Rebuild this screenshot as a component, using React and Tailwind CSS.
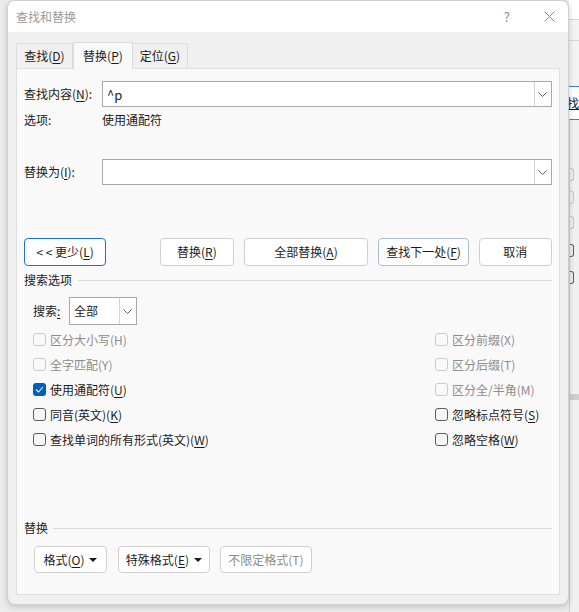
const font = { fontFamily: '"Noto Sans CJK SC", "Noto Sans", sans-serif' };

const U = ({ children }) => <span className="underline underline-offset-[2px] decoration-[1px]">{children}</span>;

const Chevron = () => (
  <svg width="9" height="5" viewBox="0 0 9 5" fill="none">
    <path d="M0.5 0.5 L4.5 4.5 L8.5 0.5" stroke="#606060" strokeWidth="1" />
  </svg>
);

const Caret = () => (
  <svg width="8" height="4" viewBox="0 0 8 4" className="ml-[5px]">
    <path d="M0 0 H8 L4 4 Z" fill="#1b1b1b" />
  </svg>
);

const Combo = ({ value }) => (
  <div className="flex-1 h-[26px] bg-white border border-[#a8a8a8] flex items-center">
    <span className="flex-1 pl-[4px] text-[13px] text-[#1b1b1b] leading-none">{value}</span>
    <div className="w-[17px] h-[24px] border-l border-[#d4d4d4] flex items-center justify-center">
      <Chevron />
    </div>
  </div>
);

const Btn = ({ children, w, h = 28, border = 'border-[#d0d0d0]', className = '' }) => (
  <div
    className={`bg-white border ${border} rounded-[4px] flex items-center justify-center text-[12px] text-[#1b1b1b] leading-none ${className}`}
    style={{ width: w, height: h }}
  >
    {children}
  </div>
);

const Check = ({ label, disabled, checked }) => (
  <div className="h-[25px] flex items-center">
    {checked ? (
      <span className="w-[13px] h-[13px] rounded-[3px] bg-[#005fb8] flex items-center justify-center">
        <svg width="9" height="7" viewBox="0 0 9 7" fill="none">
          <path d="M1 3.5 L3.5 6 L8 1" stroke="white" strokeWidth="1.1" />
        </svg>
      </span>
    ) : (
      <span
        className={`w-[13px] h-[13px] rounded-[3px] border ${
          disabled ? 'border-[#cbcbcb] bg-[#f9f9f9]' : 'border-[#5c5c5c] bg-[#f6f6f6]'
        }`}
      />
    )}
    <span className={`ml-[4px] text-[12px] leading-none ${disabled ? 'text-[#8c8c8c]' : 'text-[#1b1b1b]'}`}>{label}</span>
  </div>
);

const Section = ({ title, lineStart }) => (
  <div className="h-[16px] flex items-center">
    <span className="text-[12px] text-[#1b1b1b] leading-none">{title}</span>
    <div className="flex-1 h-px bg-[#dadada]" style={{ marginLeft: lineStart }} />
  </div>
);

export default function App() {
  return (
    <div className="w-[579px] h-[612px] bg-[#ececec] flex overflow-hidden" style={font}>
      <div className="w-[7px]" />
      <div className="w-[564px] h-[605px] bg-[#f0f0f0] rounded-[8px] border border-[#cfcfcf] shadow-[0_2px_6px_rgba(0,0,0,0.18)] flex flex-col overflow-hidden relative z-10">
        {/* title bar */}
        <div className="h-[31px] bg-white flex items-center pl-[8px] pr-[13px]">
          <span className="text-[12px] text-[#9a9a9a] leading-none">查找和替换</span>
          <span className="ml-auto text-[13px] text-[#8a8a8a] leading-none">?</span>
          <svg width="11" height="11" viewBox="0 0 11 11" className="ml-[34px]">
            <path d="M0.5 0.5 L10.5 10.5 M10.5 0.5 L0.5 10.5" stroke="#8a8a8a" strokeWidth="1" />
          </svg>
        </div>

        {/* tabs */}
        <div className="flex items-end ml-[8px] mt-[9px] h-[27px]">
          <div className="w-[57px] h-[25px] border border-[#dcdcdc] border-b-0 bg-[#f0f0f0] flex items-center justify-center text-[12px] text-[#1b1b1b] leading-none">
            查找(<U>D</U>)
          </div>
          <div className="w-[60px] h-[27px] border border-[#dcdcdc] border-b-0 bg-[#f9f9f9] flex items-center justify-center text-[12px] text-[#1b1b1b] leading-none -mb-px relative z-10">
            替换(<U>P</U>)
          </div>
          <div className="w-[55px] h-[25px] border border-[#dcdcdc] border-b-0 border-l-0 bg-[#f0f0f0] flex items-center justify-center text-[12px] text-[#1b1b1b] leading-none">
            定位(<U>G</U>)
          </div>
        </div>

        {/* panel */}
        <div className="mx-[8px] mb-[9px] flex-1 bg-[#f9f9f9] border border-[#e0e0e0] px-[7px] flex flex-col">
          <div className="mt-[12px] flex items-center">
            <span className="w-[78px] text-[12px] text-[#1b1b1b] leading-none">
              查找内容(<U>N</U>):
            </span>
            <Combo value="^p" />
          </div>
          <div className="h-[20px] mt-[3px] flex items-center text-[12px] text-[#1b1b1b] leading-none">
            <span className="w-[78px]">选项:</span>
            <span>使用通配符</span>
          </div>

          <div className="mt-[29px] flex items-center">
            <span className="w-[78px] text-[12px] text-[#1b1b1b] leading-none">
              替换为(<U>I</U>):
            </span>
            <Combo value="" />
          </div>

          <div className="mt-[53px] flex items-center">
            <Btn w={83} border="border-[#1a73c7]">
              &lt; &lt; 更少(<U>L</U>)
            </Btn>
            <Btn w={74} className="ml-[54px]">
              替换(<U>R</U>)
            </Btn>
            <Btn w={126} className="ml-[10px]">
              全部替换(<U>A</U>)
            </Btn>
            <Btn w={91} border="border-[#a9bdd6]" className="ml-[10px]">
              查找下一处(<U>F</U>)
            </Btn>
            <Btn w={74} className="ml-[10px]">
              取消
            </Btn>
          </div>

          <div className="mt-[6px]">
            <Section title="搜索选项" lineStart={6} />
          </div>

          <div className="mt-[9px] ml-[9px] flex items-center">
            <span className="text-[12px] text-[#1b1b1b] leading-none w-[36px]">
              搜索<U>:</U>
            </span>
            <div className="w-[68px] h-[28px] bg-white border border-[#a8a8a8] flex items-center">
              <span className="flex-1 pl-[4px] text-[12px] text-[#1b1b1b] leading-none">全部</span>
              <div className="w-[17px] h-[26px] border-l border-[#d4d4d4] flex items-center justify-center">
                <Chevron />
              </div>
            </div>
          </div>

          <div className="mt-[2px] ml-[9px] grid grid-cols-[402px_1fr]">
            <div className="flex flex-col">
              <Check label="区分大小写(H)" disabled />
              <Check label="全字匹配(Y)" disabled />
              <Check label={<>使用通配符(<U>U</U>)</>} checked />
              <Check label={<>同音(英文)(<U>K</U>)</>} />
              <Check label={<>查找单词的所有形式(英文)(<U>W</U>)</>} />
            </div>
            <div className="flex flex-col">
              <Check label="区分前缀(X)" disabled />
              <Check label="区分后缀(T)" disabled />
              <Check label="区分全/半角(M)" disabled />
              <Check label={<>忽略标点符号(<U>S</U>)</>} />
              <Check label={<>忽略空格(<U>W</U>)</>} />
            </div>
          </div>

          <div className="mt-[68px]">
            <Section title="替换" lineStart={5} />
          </div>

          <div className="mt-[10px] ml-[10px] flex items-center">
            <Btn w={73} h={27}>
              格式(<U>O</U>)<Caret />
            </Btn>
            <Btn w={92} h={27} className="ml-[11px]">
              特殊格式(<U>E</U>)<Caret />
            </Btn>
            <Btn w={92} h={27} className="ml-[10px]">
              <span className="text-[#8c8c8c]">不限定格式(T)</span>
            </Btn>
          </div>
        </div>
      </div>

      {/* window behind the dialog */}
      <div className="flex-1 h-[612px] flex flex-col bg-[#f3f3f3]">
        <div className="h-[20px] bg-white border-b border-[#d6d6d6]" />
        <div className="h-[21px] border-b border-[#d6d6d6]" />
        <div className="h-[46px] border-b border-[#3a7bd5]" />
        <div className="h-[32px] bg-white flex items-center">
          <span className="text-[12px] text-[#1b1b1b] leading-none -ml-[2px] underline">找</span>
        </div>
        <div className="border-t border-[#3a7bd5] flex-1 bg-[#f0f0f0] flex flex-col border-l border-l-[#d0d0d0]">
          <div className="h-[48px]" />
          <div className="w-[4px] h-[13px] border border-l-0 border-[#c6c6c6] rounded-r-[3px]" />
          <div className="w-[4px] h-[13px] mt-[10px] border border-l-0 border-[#c6c6c6] rounded-r-[3px]" />
          <div className="w-[4px] h-[13px] mt-[12px] border border-l-0 border-[#c6c6c6] rounded-r-[3px]" />
          <div className="w-[4px] h-[13px] mt-[15px] border border-l-0 border-[#5c5c5c] rounded-r-[3px]" />
          <div className="w-[4px] h-[13px] mt-[14px] border border-l-0 border-[#5c5c5c] rounded-r-[3px]" />
          <div className="mt-[110px] h-[6px] bg-[#cfcfcf]" />
        </div>
      </div>
    </div>
  );
}
